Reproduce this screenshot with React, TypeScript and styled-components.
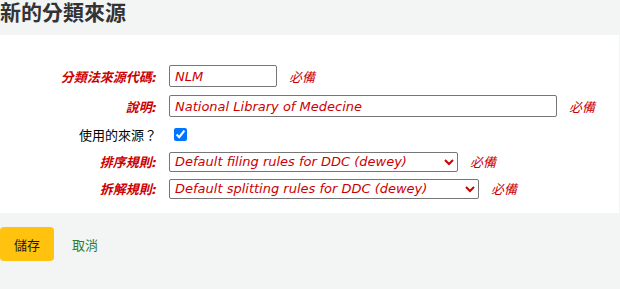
import styled, { createGlobalStyle } from 'styled-components'

const GlobalStyle = createGlobalStyle`
  html, body {
    margin: 0;
    padding: 0;
    background: #f3f4f4;
    font-family: "DejaVu Sans", "Noto Sans CJK TC", sans-serif;
    font-size: 13px;
    color: #1a1a1a;
  }
`

interface FieldRow {
  label: string
  required: boolean
  kind: 'input' | 'select' | 'checkbox'
  value: string
  width: number
}

const ROWS: FieldRow[] = [
  { label: '分類法來源代碼:', required: true, kind: 'input', value: 'NLM', width: 108 },
  { label: '說明:', required: true, kind: 'input', value: 'National Library of Medecine', width: 388 },
  { label: '使用的來源？', required: false, kind: 'checkbox', value: '', width: 0 },
  { label: '排序規則:', required: true, kind: 'select', value: 'Default filing rules for DDC (dewey)', width: 289 },
  { label: '拆解規則:', required: true, kind: 'select', value: 'Default splitting rules for DDC (dewey)', width: 310 },
]

export default function App() {
  return (
    <Page>
      <GlobalStyle />
      <Title>新的分類來源</Title>
      <Fieldset>
        {ROWS.map((row) => (
          <Row key={row.label} $tall={row.kind === 'input'}>
            <Label $required={row.required}>{row.label}</Label>
            <Control>
              {row.kind === 'input' && (
                <TextInput $width={row.width} defaultValue={row.value} readOnly />
              )}
              {row.kind === 'select' && (
                <Select $width={row.width} defaultValue={row.value}>
                  <option>{row.value}</option>
                </Select>
              )}
              {row.kind === 'checkbox' && <Checkbox type="checkbox" defaultChecked />}
              {row.required && <Required>必備</Required>}
            </Control>
          </Row>
        ))}
      </Fieldset>
      <Actions>
        <SaveButton>儲存</SaveButton>
        <CancelLink href="#">取消</CancelLink>
      </Actions>
    </Page>
  )
}

const Page = styled.div`
  width: 620px;
  min-height: 289px;
`

const Title = styled.h1`
  margin: 0 0 9px;
  padding: 0;
  font-size: 21px;
  line-height: 26px;
  font-weight: 700;
  color: #333333;
`

const Fieldset = styled.div`
  width: 619px;
  background: #ffffff;
  padding: 26px 0 11px;
  display: flex;
  flex-direction: column;
`

const Row = styled.div<{ $tall: boolean }>`
  display: grid;
  grid-template-columns: 157px 1fr;
  column-gap: 12px;
  align-items: center;
  height: ${({ $tall }) => ($tall ? '30px' : '27px')};
`

const Label = styled.label<{ $required: boolean }>`
  text-align: right;
  font-size: 13px;
  font-weight: ${({ $required }) => ($required ? 700 : 400)};
  font-style: ${({ $required }) => ($required ? 'italic' : 'normal')};
  color: ${({ $required }) => ($required ? '#cc0000' : '#000000')};
  white-space: nowrap;
`

const Control = styled.div`
  display: flex;
  align-items: center;
  gap: 12px;
`

const TextInput = styled.input<{ $width: number }>`
  box-sizing: border-box;
  width: ${({ $width }) => $width}px;
  height: 22px;
  padding: 0 5px;
  border: 1px solid #767676;
  border-radius: 2px;
  font-family: "DejaVu Sans", "Noto Sans CJK TC", sans-serif;
  font-size: 13px;
  font-style: italic;
  color: #cc0000;
  background: #ffffff;
  outline: none;
`

const Select = styled.select<{ $width: number }>`
  box-sizing: border-box;
  width: ${({ $width }) => $width}px;
  height: 20px;
  padding: 0 1px;
  border: 1px solid #767676;
  border-radius: 2px;
  font-family: "DejaVu Sans", "Noto Sans CJK TC", sans-serif;
  font-size: 13px;
  font-style: italic;
  color: #cc0000;
  background: #ffffff;
`

const Checkbox = styled.input`
  width: 13px;
  height: 13px;
  margin: 0 0 0 5px;
  accent-color: #0075ff;
`

const Required = styled.span`
  font-size: 13px;
  font-style: italic;
  color: #cc0000;
`

const Actions = styled.div`
  display: flex;
  align-items: center;
  gap: 18px;
  padding-top: 14px;
`

const SaveButton = styled.button`
  box-sizing: border-box;
  width: 54px;
  height: 34px;
  border: none;
  border-radius: 4px;
  background: #ffc20e;
  color: #1a1a1a;
  font-family: "DejaVu Sans", "Noto Sans CJK TC", sans-serif;
  font-size: 13px;
  padding: 0;
`

const CancelLink = styled.a`
  font-size: 13px;
  color: #2e7d32;
  text-decoration: none;
`
